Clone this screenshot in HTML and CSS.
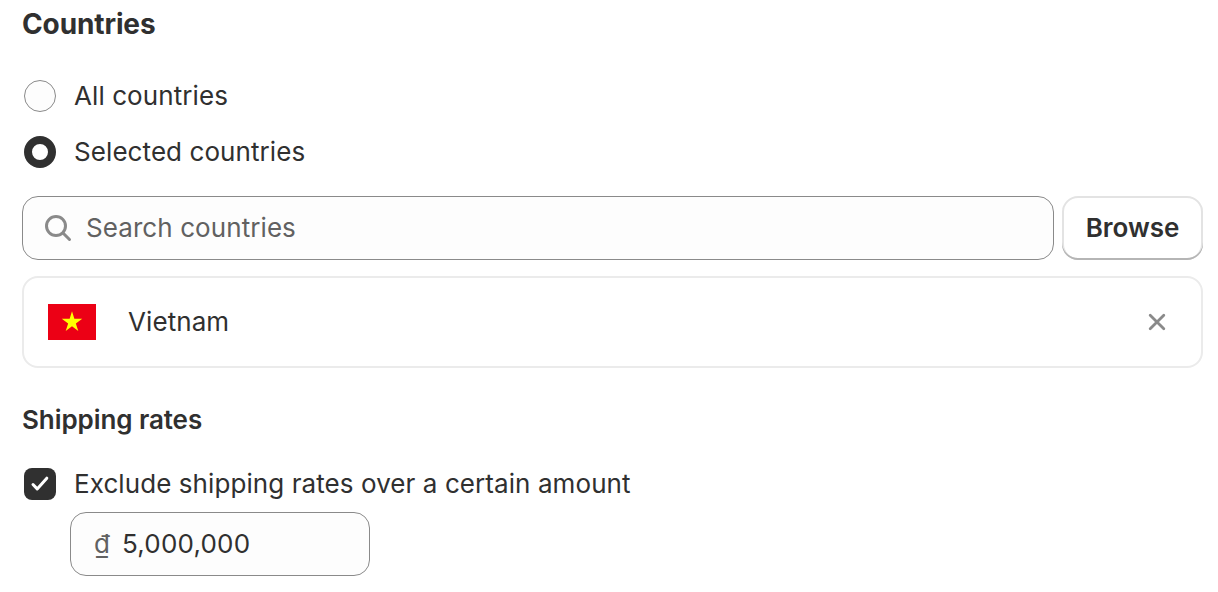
FILE: index.html
```html
<!DOCTYPE html>
<html lang="en">
<head>
    <meta charset="UTF-8">
    <meta name="viewport" content="width=device-width, initial-scale=1.0">
    <title>Countries</title>
    <link rel="stylesheet" href="styles.css">
</head>
<body>

<section class="countries">
    <h2>Countries</h2>
    <label class="choice">
        <input type="radio" name="countries">
        <span>All countries</span>
    </label>
    <label class="choice">
        <input type="radio" name="countries" checked>
        <span>Selected countries</span>
    </label>

    <div class="search-row">
        <div class="field search">
            <svg width="28" height="28" viewBox="0 0 28 28" fill="none" stroke="#8a8a8a" stroke-width="3" stroke-linecap="round">
                <circle cx="12" cy="12" r="9.500"/>
                <path d="M19 19l6.500 6.500"/>
            </svg>
            <input type="text" placeholder="Search countries">
        </div>
        <button class="browse">Browse</button>
    </div>

    <div class="country">
        <svg class="flag" width="48" height="36" viewBox="0 0 48 36">
            <rect width="48" height="36" fill="#ec0015"/>
            <path fill="#ff0" d="M24 7.200l2.350 7.560h7.900l-6.400 4.650 2.450 7.590-6.300-4.700-6.300 4.700 2.450-7.590-6.400-4.650h7.900z"/>
        </svg>
        <span>Vietnam</span>
        <button class="remove" aria-label="Remove Vietnam">
            <svg width="18" height="18" viewBox="0 0 18 18" fill="none" stroke="#8a8a8a" stroke-width="2.800" stroke-linecap="round">
                <path d="M2.200 2.200l13.600 13.600M15.800 2.200L2.200 15.800"/>
            </svg>
        </button>
    </div>
</section>

<section class="rates">
    <h3>Shipping rates</h3>
    <label class="choice">
        <span class="checkbox">
            <svg width="32" height="32" viewBox="0 0 32 32" fill="none" stroke="#fff" stroke-width="3" stroke-linecap="round" stroke-linejoin="round">
                <path d="M9 16.500l4.200 4.400 9.600-10.700"/>
            </svg>
        </span>
        <span>Exclude shipping rates over a certain amount</span>
    </label>
    <div class="field amount">
        <span class="currency">₫</span>
        <input type="text" value="5,000,000">
    </div>
</section>

</body>
</html>
```
FILE: styles.css
```css
* {
    box-sizing: border-box;
}
body {
    font-family: Inter, "Liberation Sans", sans-serif;
    font-size: 26px;
    line-height: 40px;
    letter-spacing: 0.08px;
    color: #303030;
    background-color: #fff;
    margin: 0;
    padding: 4px 15px 0 22px;
}
h2, h3 {
    line-height: 40px;
    margin: 0;
}
h2 {
    font-size: 28px;
    font-weight: 650;
    letter-spacing: -0.12px;
    margin-bottom: 24px;
}
h3 {
    font-size: 26px;
    font-weight: 600;
    letter-spacing: -0.08px;
    margin-bottom: 16px;
}
input, button {
    font: inherit;
    color: inherit;
    letter-spacing: inherit;
}
.choice {
    display: flex;
    align-items: center;
    gap: 18px;
    height: 56px;
    padding-left: 2px;
}
.choice input {
    appearance: none;
    width: 32px;
    height: 32px;
    margin: 0;
    border: 1px solid #8a8a8a;
    border-radius: 50%;
    background-color: #fdfdfd;
}
.choice input:checked {
    border: 8px solid #303030;
    background-color: #fff;
}
.search-row {
    display: flex;
    gap: 8px;
    margin-top: 16px;
}
.field {
    display: flex;
    align-items: center;
    height: 64px;
    border: 1px solid #8a8a8a;
    border-radius: 16px;
    background-color: #fdfdfd;
}
.field input {
    flex: 1;
    min-width: 0;
    padding: 0;
    border: none;
    outline: none;
    background: none;
}
.field input::placeholder {
    color: #616161;
}
.search {
    flex: 1;
    gap: 14px;
    padding: 0 21px;
}
.browse {
    width: 141px;
    border: none;
    border-radius: 16px;
    background-color: #fff;
    box-shadow: inset 0 -2px 0 #b5b5b5, inset 0 0 0 2px #e3e3e3;
    padding: 0;
    font-weight: 600;
    letter-spacing: -0.05px;
}
.country {
    display: flex;
    align-items: center;
    height: 92px;
    margin-top: 16px;
    padding: 0 35px 0 24px;
    border: 2px solid #ebebeb;
    border-radius: 16px;
}
.flag {
    margin-right: 32px;
}
.remove {
    display: flex;
    margin-left: auto;
    padding: 0;
    border: none;
    background: none;
}
.rates {
    margin-top: 32px;
}
.checkbox {
    width: 32px;
    height: 32px;
    border-radius: 8px;
    background-color: #303030;
}
.checkbox svg {
    display: block;
}
.amount {
    width: 300px;
    margin-left: 48px;
    padding: 0 23px;
    gap: 12px;
}
.amount input {
    letter-spacing: 0.2px;
}
.currency {
    color: #616161;
}
```
